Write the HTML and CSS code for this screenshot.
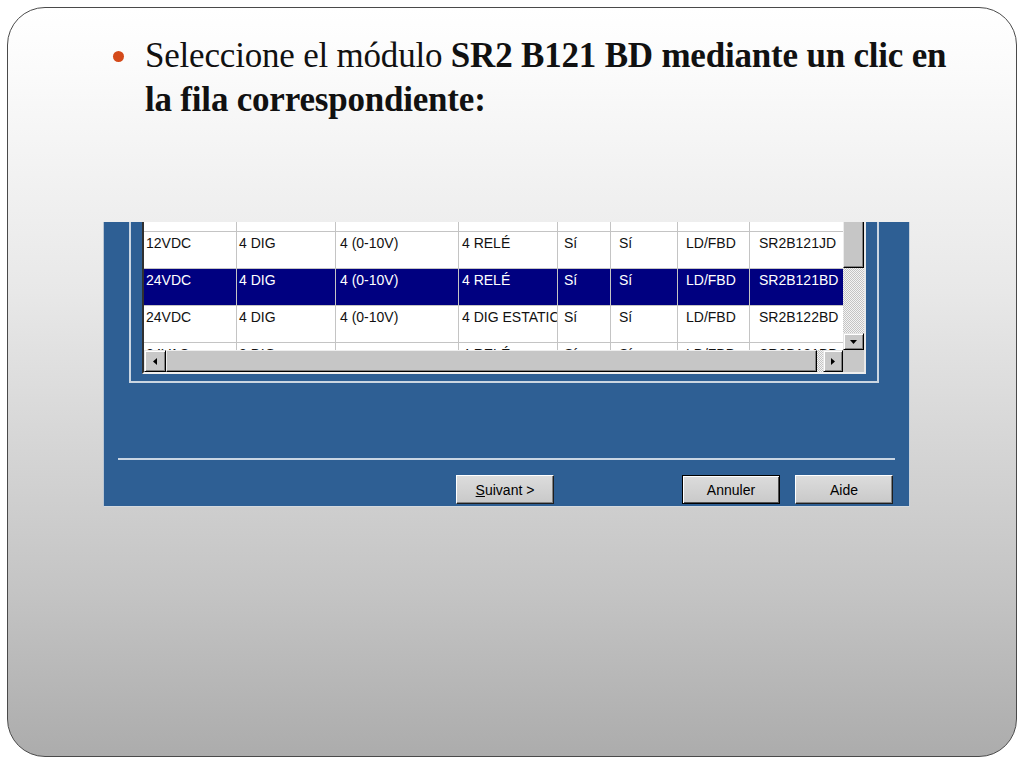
FILE: index.html
```html
<!DOCTYPE html>
<html lang="es">
<head>
<meta charset="utf-8">
<title>Seleccione el módulo SR2 B121 BD</title>
<link rel="stylesheet" href="styles.css">
</head>
<body>
<div class="slide">
  <div class="bullet-row">
    <span class="bullet"></span>
    <p class="bullet-text">Seleccione el módulo <b>SR2 B121 BD mediante un clic en</b><br><b>la fila correspondiente:</b></p>
  </div>

  <div class="dialog">
    <div class="group">
      <div class="listview">
        <div class="lv-content">
          <div class="lv-row lv-partial">
            <div class="c c1"></div><div class="c c2"></div><div class="c c3"></div><div class="c c4"></div>
            <div class="c c5"></div><div class="c c6"></div><div class="c c7"></div><div class="c c8"></div>
          </div>
          <div class="lv-row">
            <div class="c c1">12VDC</div><div class="c c2">4 DIG</div><div class="c c3">4 (0-10V)</div><div class="c c4">4 RELÉ</div>
            <div class="c c5">Sí</div><div class="c c6">Sí</div><div class="c c7">LD/FBD</div><div class="c c8">SR2B121JD</div>
          </div>
          <div class="lv-row sel">
            <div class="c c1">24VDC</div><div class="c c2">4 DIG</div><div class="c c3">4 (0-10V)</div><div class="c c4">4 RELÉ</div>
            <div class="c c5">Sí</div><div class="c c6">Sí</div><div class="c c7">LD/FBD</div><div class="c c8">SR2B121BD</div>
          </div>
          <div class="lv-row">
            <div class="c c1">24VDC</div><div class="c c2">4 DIG</div><div class="c c3">4 (0-10V)</div><div class="c c4">4 DIG ESTATICO</div>
            <div class="c c5">Sí</div><div class="c c6">Sí</div><div class="c c7">LD/FBD</div><div class="c c8">SR2B122BD</div>
          </div>
          <div class="lv-row">
            <div class="c c1">24VAC</div><div class="c c2">8 DIG</div><div class="c c3"></div><div class="c c4">4 RELÉ</div>
            <div class="c c5">Sí</div><div class="c c6">Sí</div><div class="c c7">LD/FBD</div><div class="c c8">SR2B121BD</div>
          </div>
        </div>

        <div class="vscroll">
          <div class="vthumb"></div>
          <div class="track vtrack"></div>
          <div class="sb-btn vdown">
            <svg width="7" height="4" viewBox="0 0 7 4"><polygon points="0,0 7,0 3.5,4" fill="#000"/></svg>
          </div>
        </div>

        <div class="hscroll">
          <div class="sb-btn hleft">
            <svg width="4" height="7" viewBox="0 0 4 7"><polygon points="4,0 0,3.5 4,7" fill="#000"/></svg>
          </div>
          <div class="hthumb"></div>
          <div class="track htrack"></div>
          <div class="sb-btn hright">
            <svg width="4" height="7" viewBox="0 0 4 7"><polygon points="0,0 4,3.5 0,7" fill="#000"/></svg>
          </div>
        </div>

        <div class="corner"></div>
      </div>
    </div>

    <div class="separator"></div>

    <div class="buttons">
      <button type="button" class="btn btn-next"><u>S</u>uivant &gt;</button>
      <button type="button" class="btn btn-cancel">Annuler</button>
      <button type="button" class="btn btn-help">Aide</button>
    </div>
  </div>
</div>
</body>
</html>
```

FILE: styles.css
```css
html, body {
  margin: 0;
  background: #ffffff;
}

body {
  padding: 7px;
}

.slide {
  width: 1010px;
  height: 750px;
  box-sizing: border-box;
  border: 1px solid #4a4a4a;
  border-radius: 38px;
  background: linear-gradient(to bottom, #ffffff 0%, #fbfbfb 8%, #e8e8e8 38%, #c4c4c4 78%, #acacac 100%);
  padding-top: 26px;
  overflow: hidden;
}

/* ---------- bullet text ---------- */
.bullet-row {
  display: flex;
  margin-left: 105px;
}

.bullet {
  flex: none;
  width: 11px;
  height: 11px;
  border-radius: 50%;
  background: #d44a1a;
  margin-top: 17px;
  margin-right: 21px;
}

.bullet-text {
  margin: 0;
  font-family: "Liberation Serif", "Times New Roman", serif;
  font-size: 35px;
  line-height: 44px;
  letter-spacing: -0.2px;
  color: #111111;
  white-space: nowrap;
}

.bullet-text b {
  font-weight: bold;
}

/* ---------- dialog screenshot ---------- */
.dialog {
  margin-top: 100px;
  margin-left: 95px;
  width: 807px;
  height: 285px;
  box-sizing: border-box;
  background: #2e5f94;
  border-left: 1px solid #b8c5d3;
  border-right: 1px solid #c8d1db;
  border-bottom: 1px solid #d4d9de;
  display: flex;
  flex-direction: column;
  font-family: "Liberation Sans", Arial, sans-serif;
  font-size: 14px;
}

.group {
  margin-left: 25px;
  width: 750px;
  height: 161px;
  box-sizing: border-box;
  border: 2px solid #cbd6e2;
  border-top: none;
  padding: 0 11px 6px 11px;
}

.listview {
  display: grid;
  grid-template-columns: 699px 21px;
  grid-template-rows: 128px 22px;
  width: 724px;
  box-sizing: border-box;
  border-left: 2px solid #303030;
  border-right: 2px solid #e8e8e8;
  border-bottom: 2px solid #eeeeee;
}

.lv-content {
  overflow: hidden;
  background: #ffffff;
}

.lv-row {
  display: grid;
  grid-template-columns: 93px 99px 123px 99px 53px 67px 72px 93px;
  height: 37px;
  box-sizing: border-box;
  border-bottom: 1px solid #c4c4c4;
  color: #111111;
}

.lv-partial {
  margin-top: -27px;
}

.lv-row.sel {
  background: #000080;
  color: #ffffff;
}

.c {
  border-right: 1px solid #c4c4c4;
  overflow: hidden;
  white-space: nowrap;
  line-height: 16px;
  padding-top: 3px;
}

.c8 { border-right: none; }

.c1 { padding-left: 2px; }
.c2 { padding-left: 2px; }
.c3 { padding-left: 4px; }
.c4 { padding-left: 3px; }
.c5 { padding-left: 6px; }
.c6 { padding-left: 8px; }
.c7 { padding-left: 8px; }
.c8 { padding-left: 9px; }

/* scrollbars */
.sb-btn {
  box-sizing: border-box;
  background: #c8c8c8;
  border-top: 1px solid #e6e6e6;
  border-left: 1px solid #e6e6e6;
  border-right: 1px solid #000000;
  border-bottom: 1px solid #000000;
  box-shadow: inset 1px 1px 0 #ffffff, inset -1px -1px 0 #808080;
  display: flex;
  align-items: center;
  justify-content: center;
}

.track {
  background: repeating-conic-gradient(#c4c4c4 0 25%, #f4f4f4 0 50%) 0 0 / 2px 2px;
}

.vscroll {
  display: flex;
  flex-direction: column;
}

.vthumb {
  height: 46px;
  box-sizing: border-box;
  background: #c6c6c6;
  border-left: 1px solid #ececec;
  border-right: 1px solid #000000;
  border-bottom: 1px solid #000000;
  box-shadow: inset -1px -1px 0 #808080;
}

.vtrack {
  flex: 1;
}

.vdown {
  height: 17px;
}

.hscroll {
  display: flex;
}

.hleft {
  width: 22px;
}

.hthumb {
  width: 651px;
  box-sizing: border-box;
  background: #c6c6c6;
  border-top: 1px solid #eeeeee;
  border-left: 1px solid #eeeeee;
  border-right: 1px solid #000000;
  border-bottom: 1px solid #000000;
  box-shadow: inset -1px -1px 0 #808080;
}

.htrack {
  width: 6px;
}

.hright {
  width: 20px;
}

.corner {
  background: #c8c8c8;
}

/* separator + buttons */
.separator {
  margin: 75px 0 0 14px;
  width: 777px;
  height: 2px;
  background: #c9d5e3;
}

.buttons {
  display: flex;
  margin-top: 15px;
}

.btn {
  width: 98px;
  height: 29px;
  box-sizing: border-box;
  padding: 0;
  margin: 0;
  background: linear-gradient(to bottom, #dcdcdc, #c9c9c9);
  border-top: 1px solid #ffffff;
  border-left: 1px solid #ffffff;
  border-right: 1px solid #1e1e1e;
  border-bottom: 1px solid #1e1e1e;
  box-shadow: inset -1px -1px 0 #808080;
  font-family: "Liberation Sans", Arial, sans-serif;
  font-size: 14px;
  color: #000000;
  display: flex;
  align-items: center;
  justify-content: center;
}

.btn-next {
  margin-left: 352px;
}

.btn-cancel {
  margin-left: 128px;
  border: 1px solid #000000;
  box-shadow: inset 1px 1px 0 #ffffff, inset -1px -1px 0 #505050;
}

.btn-help {
  margin-left: 15px;
}
```
